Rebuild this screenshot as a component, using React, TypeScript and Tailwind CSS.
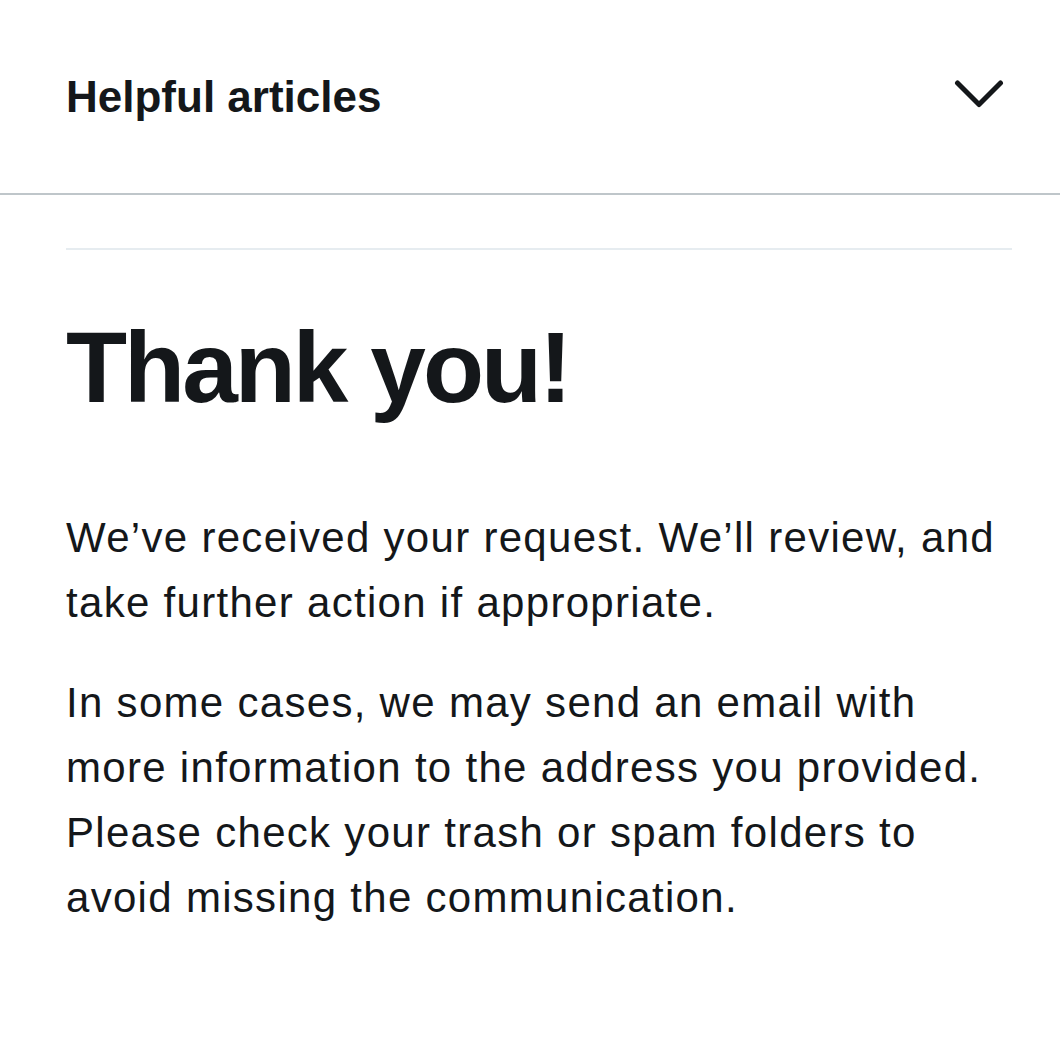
export default function App() {
  return (
    <div className="min-h-screen bg-white text-[#14171a]" style={{ fontFamily: '"Liberation Sans", Arial, sans-serif' }}>
      {/* HEADER */}
      <div className="h-[195px] flex items-center justify-between pl-[66px] pr-[56px] border-b-2 border-[#bfc6ca]">
        <h2 className="text-[44px] leading-none font-bold">Helpful articles</h2>
        <svg className="-mt-[6px]" width="50" height="30" viewBox="0 0 50 30" fill="none" stroke="currentColor" strokeWidth="5" strokeLinecap="round" strokeLinejoin="round">
          <path d="M3.5 4 L25 25.5 L46.5 4" />
        </svg>
      </div>

      {/* CONTENT */}
      <div className="pl-[66px] pr-[48px] pt-[53px]">
        <div className="h-[2px] bg-[#e6ecf0]" />
        <h1 className="mt-[67px] text-[100px] leading-none font-bold tracking-[-3px]">Thank you!</h1>
        <p className="mt-[88px] text-[42px] leading-[65px] tracking-[1.3px]">
          We’ve received your request. We’ll review, and take further action if appropriate.
        </p>
        <p className="mt-[35px] text-[42px] leading-[65px] tracking-[1.3px]">
          In some cases, we may send an email with more information to the address you provided. Please check your trash or spam folders to avoid missing the communication.
        </p>
      </div>
    </div>
  );
}
